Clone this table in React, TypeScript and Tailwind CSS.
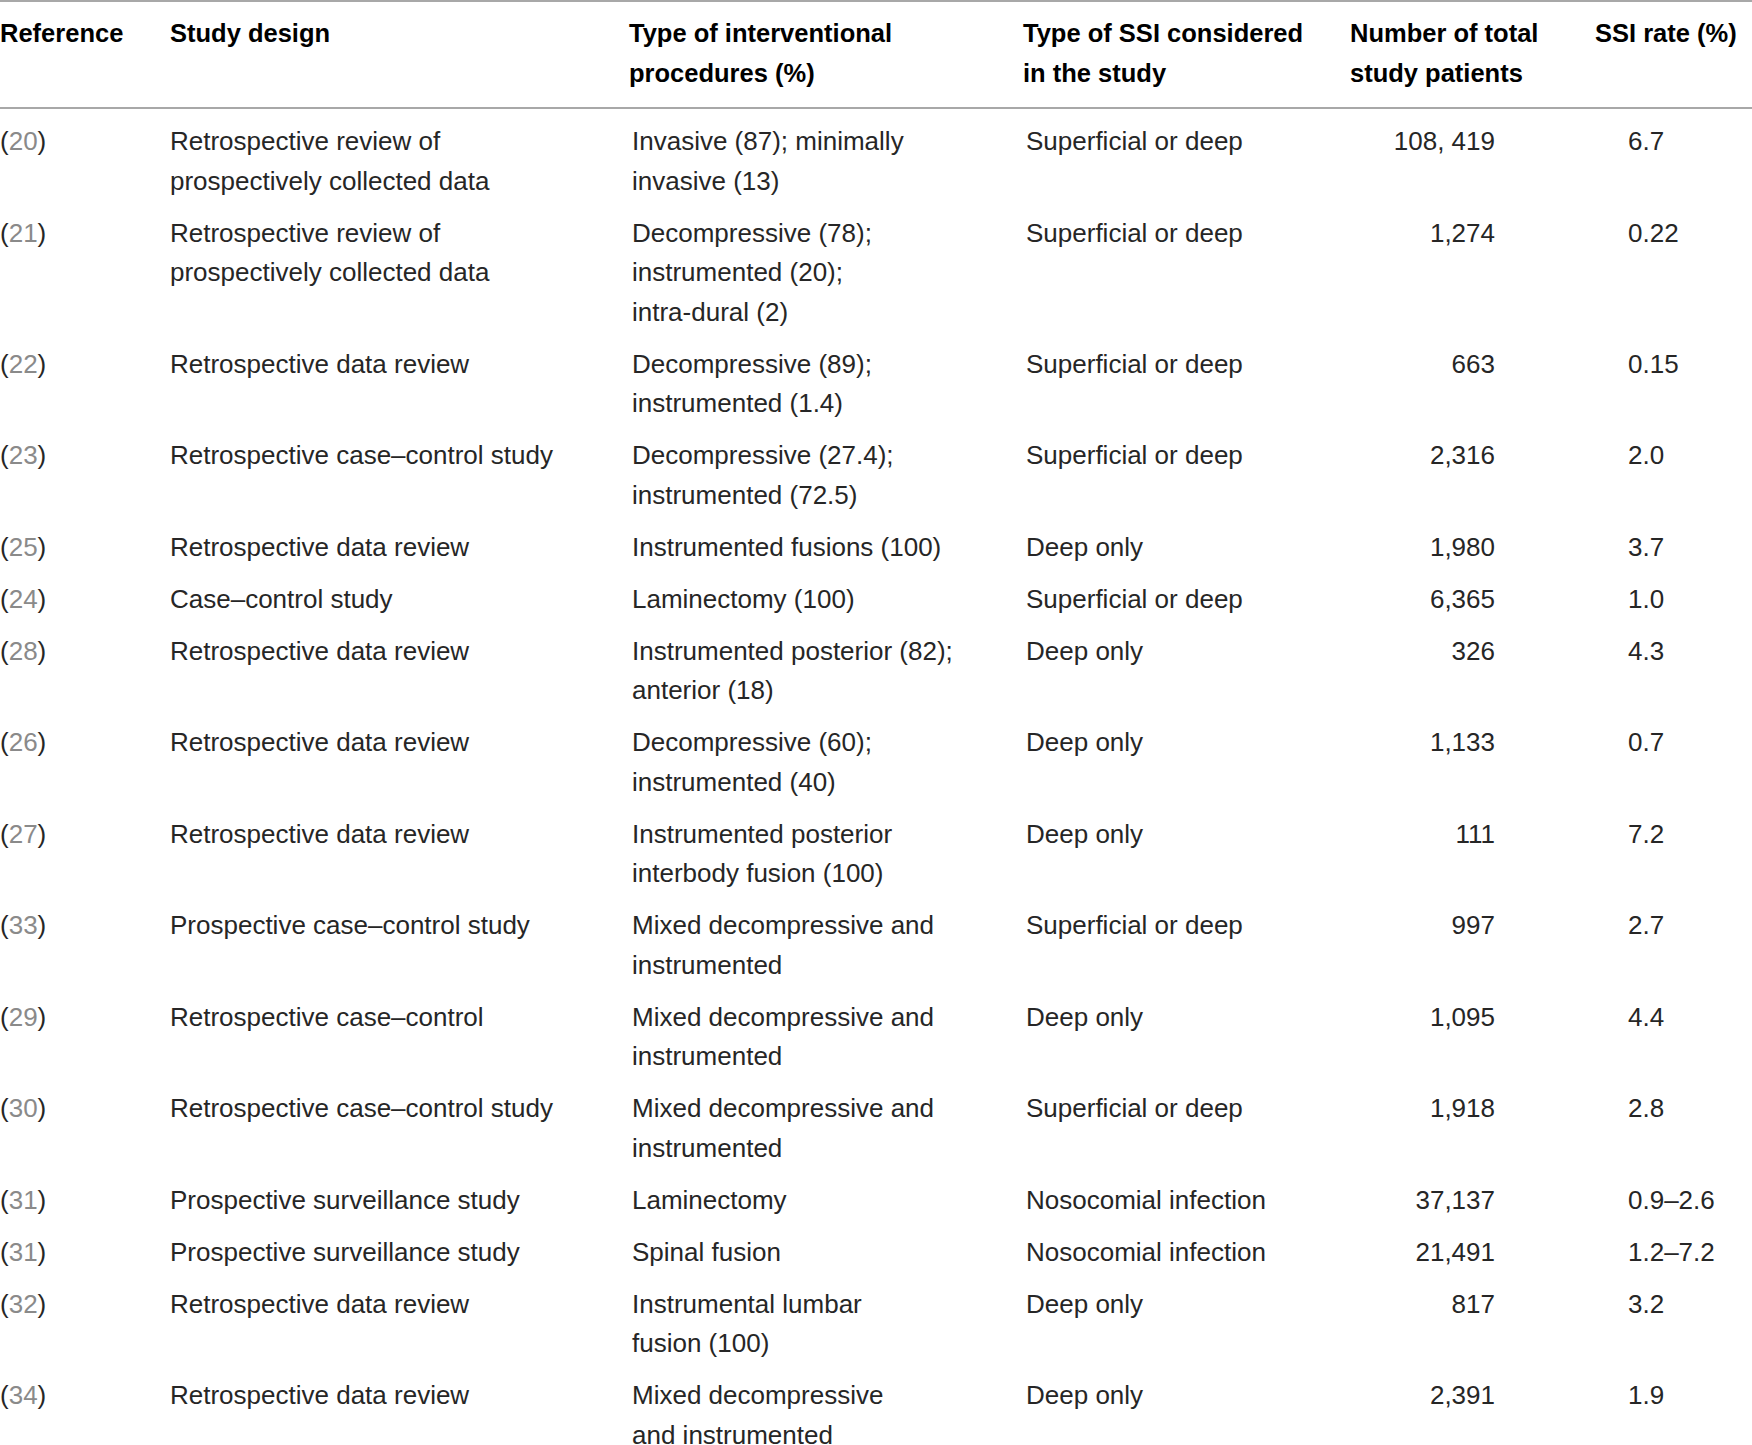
import React from "react";

type Row = {
  ref: string;
  design: string[];
  proc: string[];
  ssi: string;
  n: string;
  rate: string;
};

const rows: Row[] = [
  { ref: "20", design: ["Retrospective review of", "prospectively collected data"], proc: ["Invasive (87); minimally", "invasive (13)"], ssi: "Superficial or deep", n: "108, 419", rate: "6.7" },
  { ref: "21", design: ["Retrospective review of", "prospectively collected data"], proc: ["Decompressive (78);", "instrumented (20);", "intra-dural (2)"], ssi: "Superficial or deep", n: "1,274", rate: "0.22" },
  { ref: "22", design: ["Retrospective data review"], proc: ["Decompressive (89);", "instrumented (1.4)"], ssi: "Superficial or deep", n: "663", rate: "0.15" },
  { ref: "23", design: ["Retrospective case\u2013control study"], proc: ["Decompressive (27.4);", "instrumented (72.5)"], ssi: "Superficial or deep", n: "2,316", rate: "2.0" },
  { ref: "25", design: ["Retrospective data review"], proc: ["Instrumented fusions (100)"], ssi: "Deep only", n: "1,980", rate: "3.7" },
  { ref: "24", design: ["Case\u2013control study"], proc: ["Laminectomy (100)"], ssi: "Superficial or deep", n: "6,365", rate: "1.0" },
  { ref: "28", design: ["Retrospective data review"], proc: ["Instrumented posterior (82);", "anterior (18)"], ssi: "Deep only", n: "326", rate: "4.3" },
  { ref: "26", design: ["Retrospective data review"], proc: ["Decompressive (60);", "instrumented (40)"], ssi: "Deep only", n: "1,133", rate: "0.7" },
  { ref: "27", design: ["Retrospective data review"], proc: ["Instrumented posterior", "interbody fusion (100)"], ssi: "Deep only", n: "111", rate: "7.2" },
  { ref: "33", design: ["Prospective case\u2013control study"], proc: ["Mixed decompressive and", "instrumented"], ssi: "Superficial or deep", n: "997", rate: "2.7" },
  { ref: "29", design: ["Retrospective case\u2013control"], proc: ["Mixed decompressive and", "instrumented"], ssi: "Deep only", n: "1,095", rate: "4.4" },
  { ref: "30", design: ["Retrospective case\u2013control study"], proc: ["Mixed decompressive and", "instrumented"], ssi: "Superficial or deep", n: "1,918", rate: "2.8" },
  { ref: "31", design: ["Prospective surveillance study"], proc: ["Laminectomy"], ssi: "Nosocomial infection", n: "37,137", rate: "0.9\u20132.6" },
  { ref: "31", design: ["Prospective surveillance study"], proc: ["Spinal fusion"], ssi: "Nosocomial infection", n: "21,491", rate: "1.2\u20137.2" },
  { ref: "32", design: ["Retrospective data review"], proc: ["Instrumental lumbar", "fusion (100)"], ssi: "Deep only", n: "817", rate: "3.2" },
  { ref: "34", design: ["Retrospective data review"], proc: ["Mixed decompressive", "and instrumented"], ssi: "Deep only", n: "2,391", rate: "1.9" },
];

const grid = "grid grid-cols-[170px_462px_394px_324px_245px_157px]";

function Lines({ lines, className = "" }: { lines: string[]; className?: string }) {
  return (
    <div className={className}>
      {lines.map((l, i) => (
        <div key={i} className="whitespace-nowrap">
          {l}
        </div>
      ))}
    </div>
  );
}

export default function App() {
  return (
    <div
      className="w-[1752px] bg-white text-[#262626]"
      style={{ fontFamily: '"Liberation Sans", Arial, sans-serif' }}
    >
      <div className="border-t-2 border-b-2 border-[#a8a8a8] pt-[11px] pb-[14px]">
        <div className={`${grid} text-[25.5px] leading-[40px] font-bold text-black`}>
          <div className="whitespace-nowrap">Reference</div>
          <div className="whitespace-nowrap">Study design</div>
          <Lines className="-ml-[3px]" lines={["Type of interventional", "procedures (%)"]} />
          <Lines className="-ml-[3px]" lines={["Type of SSI considered", "in the study"]} />
          <Lines lines={["Number of total", "study patients"]} />
          <div className="whitespace-nowrap">SSI rate (%)</div>
        </div>
      </div>
      <div className="pt-[7px] text-[26px] leading-[39.5px]">
        {rows.map((r, i) => (
          <div key={i} className={`${grid} py-[6.25px]`}>
            <div className="whitespace-nowrap">
              (<span className="text-[#8a8a8a]">{r.ref}</span>)
            </div>
            <Lines lines={r.design} />
            <Lines lines={r.proc} />
            <div className="whitespace-nowrap">{r.ssi}</div>
            <div className="whitespace-nowrap pr-[100px] text-right">{r.n}</div>
            <div className="whitespace-nowrap pl-[33px]">{r.rate}</div>
          </div>
        ))}
      </div>
    </div>
  );
}
